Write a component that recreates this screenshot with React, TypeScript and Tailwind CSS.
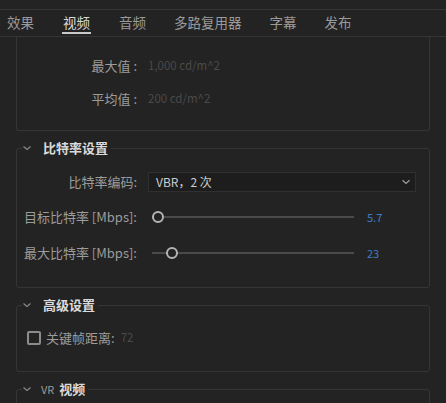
import type { ReactNode } from 'react';

const tabs = ['效果', '视频', '音频', '多路复用器', '字幕', '发布'];

function Chevron() {
  return (
    <svg width="10" height="6" viewBox="0 0 10 6" className="shrink-0">
      <path d="M1.5 1.5 L5 4.5 L8.5 1.5" fill="none" stroke="#8a8a8a" strokeWidth="1.2" />
    </svg>
  );
}

function Section({ title, children, className = '' }: { title: ReactNode; children?: ReactNode; className?: string }) {
  return (
    <fieldset className={`border border-[#353535] rounded-[3px] ${className}`}>
      <legend className="ml-[5px] pr-[3px] flex items-center h-[20px]">
        <Chevron />
        <span className="ml-[11px] text-[13px] font-bold text-[#dadada] flex items-baseline">{title}</span>
      </legend>
      {children}
    </fieldset>
  );
}

function Label({ children }: { children: ReactNode }) {
  return <div className="w-[120px] text-right text-[13px] text-[#9c9c9c] shrink-0 whitespace-nowrap">{children}</div>;
}

function Slider({ offset, value }: { offset: number; value: string }) {
  return (
    <div className="flex items-center">
      <div className="relative w-[202px] h-[12px] ml-[4px]">
        <div className="absolute left-0 right-0 top-[5px] h-[2px] bg-[#4a4a4a]" />
        <div
          className="absolute top-0 w-[12px] h-[12px] rounded-full border-2 border-[#b4b4b4] bg-[#232323]"
          style={{ left: offset }}
        />
      </div>
      <span className="ml-[13px] text-[11px] text-[#3f7cc4]">{value}</span>
    </div>
  );
}

export default function App() {
  return (
    <div className="w-[446px] h-[403px] overflow-hidden bg-[#232323] font-['Noto_Sans_CJK_SC','Noto_Sans',sans-serif]">
      <div className="h-[10px] border-b border-[#363636]" />
      {/* Tabs */}
      <div className="h-[27px] border-b border-[#363636] flex pl-[7px] gap-[28px]">
        {tabs.map((t, i) => (
          <div key={t} className="relative flex flex-col items-center">
            <span className={`text-[13.5px] leading-[26px] mt-[-1px] ${i === 1 ? 'text-[#d8d8d8]' : 'text-[#9a9a9a]'}`}>{t}</span>
            {i === 1 && <div className="h-[2px] w-[29px] bg-[#c8c8c8] mt-[-3px]" />}
          </div>
        ))}
      </div>

      <div className="px-[16px] flex flex-col">
        {/* HDR panel */}
        <div className="h-[94px] border-x border-b border-[#353535] rounded-b-[3px] pt-[19px] flex flex-col gap-[13px]">
          <div className="flex items-center h-[20px]">
            <Label>最大值 :</Label>
            <span className="ml-[11px] text-[11.5px] text-[#4a4a4a]">1,000 cd/m^2</span>
          </div>
          <div className="flex items-center h-[20px]">
            <Label>平均值 :</Label>
            <span className="ml-[11px] text-[11.5px] text-[#4a4a4a]">200 cd/m^2</span>
          </div>
        </div>

        {/* Bitrate */}
        <Section title="比特率设置" className="mt-[7px] h-[150px]">
          <div className="pt-[14px] flex flex-col">
            <div className="flex items-center h-[20px]">
              <Label>比特率编码:</Label>
              <div className="ml-[11px] w-[268px] h-[20px] bg-[#1d1d1d] border border-[#303030] flex items-center justify-between pl-[7px] pr-[4px]">
                <span className="text-[12px] text-[#cccccc]">VBR，2 次</span>
                <svg width="10" height="6" viewBox="0 0 10 6">
                  <path d="M1.5 1.2 L5 4.5 L8.5 1.2" fill="none" stroke="#a0a0a0" strokeWidth="1.2" />
                </svg>
              </div>
            </div>
            <div className="flex items-center h-[20px] mt-[15px]">
              <Label>目标比特率 [Mbps]:</Label>
              <div className="ml-[11px]">
                <Slider offset={0} value="5.7" />
              </div>
            </div>
            <div className="flex items-center h-[20px] mt-[16px]">
              <Label>最大比特率 [Mbps]:</Label>
              <div className="ml-[11px]">
                <Slider offset={14} value="23" />
              </div>
            </div>
          </div>
        </Section>

        {/* Advanced */}
        <Section title="高级设置" className="mt-[7px] h-[77px]">
          <div className="pt-[13px] pl-[10px] flex items-center h-[33px]">
            <div className="w-[14px] h-[14px] border-2 border-[#8c8c8c] rounded-[2px]" />
            <span className="ml-[5px] text-[13px] text-[#9c9c9c]">关键帧距离:</span>
            <span className="ml-[6px] text-[11.5px] text-[#4a4a4a]">72</span>
          </div>
        </Section>

        {/* VR */}
        <Section
          title={
            <>
              <span className="text-[11px] font-normal text-[#9a9a9a] mr-[5px] ml-[-2px]">VR</span>
              <span>视频</span>
            </>
          }
          className="mt-[7px] h-[60px]"
        />
      </div>
    </div>
  );
}
